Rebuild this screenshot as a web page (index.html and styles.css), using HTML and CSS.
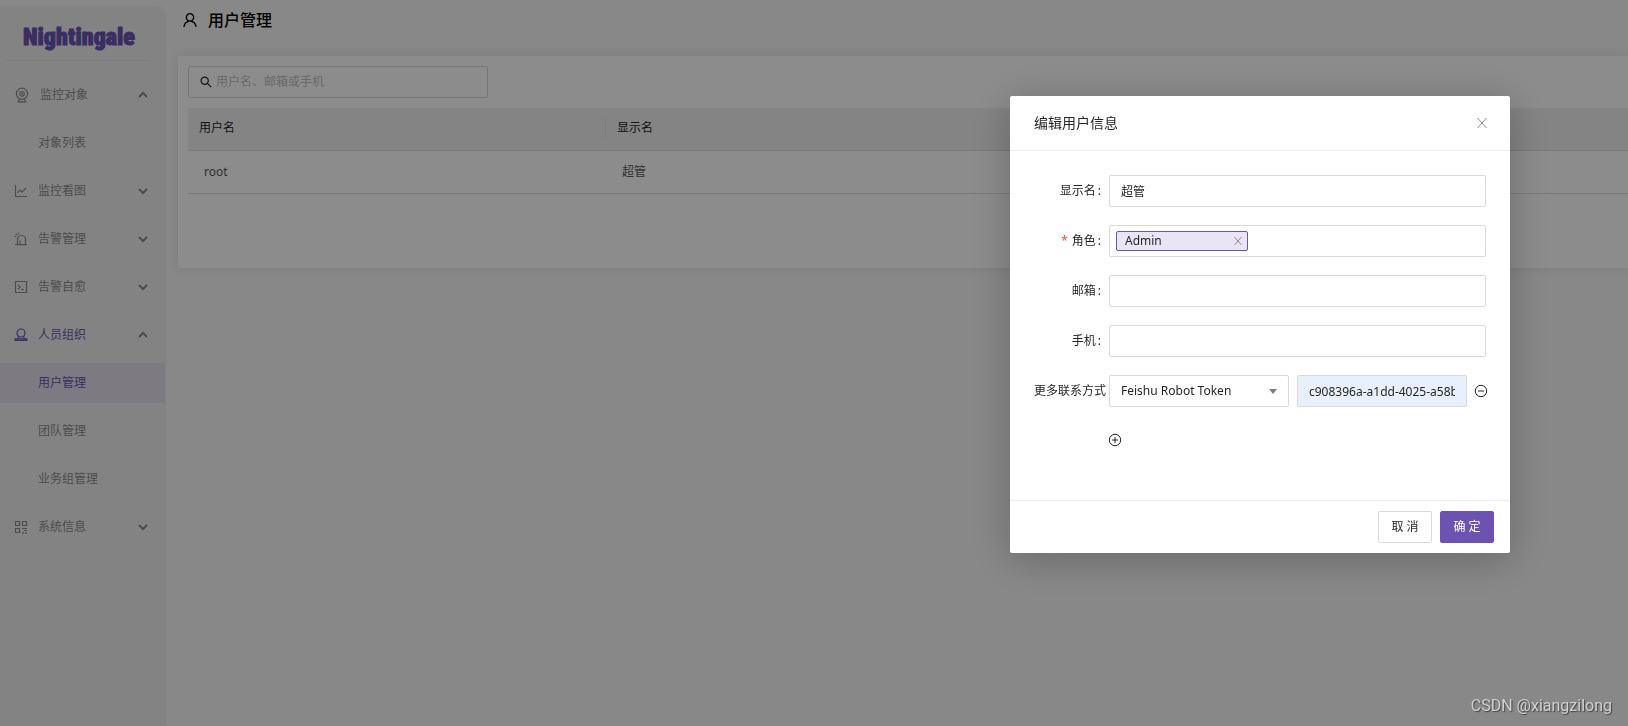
FILE: index.html
```html
<!DOCTYPE html>
<html lang="zh-CN">
<head>
  <meta charset="UTF-8">
  <title>用户管理</title>
  <link rel="stylesheet" href="styles.css">
</head>
<body>

<div class="layout">
  <aside class="sidebar">
    <div class="logo">Nightingale</div>
    <nav class="menu">
      <a href="#" class="menu-item">
        <svg class="icon icon-lg" viewBox="0 0 16 16"><circle cx="8" cy="6.8" r="5.6"/><circle cx="8" cy="6.8" r="2.3"/><circle cx="8" cy="6.8" r=".4"/><path d="M5.6 12.2L4.6 14.6M10.4 12.2l1 2.4M3.5 14.8h9"/></svg>
        <span>监控对象</span>
        <svg class="arrow" viewBox="0 0 10 10"><path d="M1 7l4-4 4 4"/></svg>
      </a>
      <a href="#" class="menu-item sub">对象列表</a>
      <a href="#" class="menu-item">
        <svg class="icon" viewBox="0 0 14 14"><path d="M1.5 1v11.5H13M3.5 9l2.3-3 2.4 2L12 4"/></svg>
        <span>监控看图</span>
        <svg class="arrow" viewBox="0 0 10 10"><path d="M1 3l4 4 4-4"/></svg>
      </a>
      <a href="#" class="menu-item">
        <svg class="icon" viewBox="0 0 14 14"><path d="M3.5 12V7.5a4 4 0 0 1 8 0V12M1 12.7h12M6 12V8.5M.5 4.5h2M1.6 1.6l1.6 1.6M4.6.6v1.6"/></svg>
        <span>告警管理</span>
        <svg class="arrow" viewBox="0 0 10 10"><path d="M1 3l4 4 4-4"/></svg>
      </a>
      <a href="#" class="menu-item">
        <svg class="icon" viewBox="0 0 14 14"><path d="M1.5 1.5h11v11h-11zM4 4.8L6.2 7 4 9.2M7 9.5h3"/></svg>
        <span>告警自愈</span>
        <svg class="arrow" viewBox="0 0 10 10"><path d="M1 3l4 4 4-4"/></svg>
      </a>
      <a href="#" class="menu-item open">
        <svg class="icon" viewBox="0 0 14 14"><circle cx="7" cy="5" r="4"/><path d="M4.5 8.3L3.8 10.5M9.5 8.3l.7 2.2M1.2 10.8h11.6v1.6H1.2z"/></svg>
        <span>人员组织</span>
        <svg class="arrow" viewBox="0 0 10 10"><path d="M1 7l4-4 4 4"/></svg>
      </a>
      <a href="#" class="menu-item sub active">用户管理</a>
      <a href="#" class="menu-item sub">团队管理</a>
      <a href="#" class="menu-item sub">业务组管理</a>
      <a href="#" class="menu-item">
        <svg class="icon" viewBox="0 0 14 14"><path d="M1.5 1.5h4v4h-4zM8.5 1.5h4v4h-4zM1.5 8.5h4v4h-4zM8 8.5h5M10 10.5h3M8 12.8h2M11 12.8h2"/></svg>
        <span>系统信息</span>
        <svg class="arrow" viewBox="0 0 10 10"><path d="M1 3l4 4 4-4"/></svg>
      </a>
    </nav>
  </aside>

  <main class="content">
    <header class="page-header">
      <svg class="user-icon" viewBox="0 0 1024 1024"><path d="M858.5 763.6a374 374 0 00-80.6-119.5 375.63 375.63 0 00-119.5-80.6c-.4-.2-.8-.3-1.2-.5C719.5 518 760 444.7 760 362c0-137-111-248-248-248S264 225 264 362c0 82.7 40.5 156 102.8 201.1-.4.2-.8.3-1.2.5-44.8 18.9-85 46-119.5 80.6a375.63 375.63 0 00-80.6 119.5A371.7 371.7 0 00136 901.8a8 8 0 008 8.2h60c4.4 0 7.9-3.5 8-7.8 2-77.2 33-149.5 87.8-204.3 56.7-56.7 132-87.9 212.2-87.9s155.5 31.2 212.2 87.9C779 752.7 810 825 812 902.2c.1 4.4 3.6 7.8 8 7.8h60a8 8 0 008-8.2c-1-47.8-10.9-94.3-29.5-138.2zM512 534c-45.9 0-89.1-17.9-121.6-50.4S340 407.9 340 362c0-45.9 17.9-89.1 50.4-121.6S466.1 190 512 190s89.1 17.9 121.6 50.4S684 316.1 684 362c0 45.9-17.9 89.1-50.4 121.6S557.9 534 512 534z"/></svg>
      <h1>用户管理</h1>
    </header>

    <section class="card">
      <label class="search">
        <svg viewBox="0 0 12 12"><circle cx="4.7" cy="4.7" r="3.6"/><path d="M7.4 7.4l3.8 3.8"/></svg>
        <input type="text" placeholder="用户名、邮箱或手机" aria-label="搜索">
      </label>
      <table class="user-table">
        <thead>
          <tr><th class="col">用户名</th><th class="col">显示名</th><th></th></tr>
        </thead>
        <tbody>
          <tr><td>root</td><td>超管</td><td></td></tr>
        </tbody>
      </table>
    </section>
  </main>
</div>

<!-- Modal -->
<div class="modal-mask">
  <div class="modal" role="dialog" aria-labelledby="modalTitle">
    <div class="modal-header">
      <h2 id="modalTitle">编辑用户信息</h2>
      <button type="button" class="icon-btn close-btn" aria-label="关闭">
        <svg viewBox="0 0 12 12"><path d="M1.5 1l9 10M10.5 1l-9 10"/></svg>
      </button>
    </div>
    <form class="modal-body" id="userForm">
      <div class="form-row">
        <label for="nickname">显示名</label>
        <input type="text" id="nickname" class="field" value="超管">
      </div>
      <div class="form-row">
        <label for="roles" class="required">角色</label>
        <div class="field tag-field">
          <span class="tag">Admin
            <button type="button" class="icon-btn tag-close" aria-label="移除">
              <svg viewBox="0 0 10 10"><path d="M1.5 1l7 8M8.5 1l-7 8"/></svg>
            </button>
          </span>
          <input type="text" id="roles">
        </div>
      </div>
      <div class="form-row">
        <label for="email">邮箱</label>
        <input type="text" id="email" class="field">
      </div>
      <div class="form-row">
        <label for="phone">手机</label>
        <input type="text" id="phone" class="field">
      </div>
      <div class="form-row">
        <label for="contact">更多联系方式</label>
        <div class="contact-row">
          <div class="select-wrap">
            <select id="contact" class="field">
              <option>Feishu Robot Token</option>
            </select>
          </div>
          <input type="text" class="field token" value="c908396a-a1dd-4025-a58b-7d2e" aria-label="Token">
          <button type="button" class="icon-btn round-btn" aria-label="删除">
            <svg viewBox="0 0 14 14"><circle cx="7" cy="7" r="5.7"/><path d="M4 7h6"/></svg>
          </button>
        </div>
      </div>
      <div class="form-row add-row">
        <button type="button" class="icon-btn round-btn" aria-label="添加">
          <svg viewBox="0 0 14 14"><circle cx="7" cy="7" r="5.7"/><path d="M4 7h6M7 4v6"/></svg>
        </button>
      </div>
    </form>
    <div class="modal-footer">
      <button type="button" class="btn">取 消</button>
      <button type="submit" form="userForm" class="btn btn-primary">确 定</button>
    </div>
  </div>
</div>

<div class="watermark">CSDN @xiangzilong</div>

</body>
</html>
```

FILE: styles.css
```css
* {
  box-sizing: border-box;
}
body {
  margin: 0;
  font-family: "Noto Sans", "Noto Sans CJK SC", sans-serif;
  font-size: 12px;
  line-height: 20px;
  color: #262626;
  background: #f8f8f8;
  overflow: hidden;
}
input, select, button {
  font: inherit;
  color: inherit;
}
svg {
  display: block;
  flex: none;
  fill: none;
  stroke: currentColor;
}
.layout {
  display: flex;
  min-height: 100vh;
}

/* Sidebar */
.sidebar {
  flex: none;
  width: 166px;
  margin-top: 6px;
  padding-right: 1px;
  background: #efefef;
  border-top-right-radius: 8px;
}
.logo {
  height: 55px;
  margin: 0 15px 14px 6px;
  padding-left: 17px;
  border-bottom: 1px solid #e2e2e2;
  font-family: Impact, "Roboto Condensed", Roboto, sans-serif;
  font-size: 24px;
  font-weight: 900;
  line-height: 62px;
  color: #6c53b1;
  -webkit-text-stroke: 1px #6c53b1;
}
.menu-item {
  display: flex;
  align-items: center;
  gap: 10px;
  height: 40px;
  margin-bottom: 8px;
  padding: 0 17px 0 14px;
  color: #8c8c8c;
  text-decoration: none;
}
.menu-item.sub {
  padding-left: 38px;
}
.menu-item.open, .menu-item.active {
  color: #6c53b1;
}
.menu-item.active {
  background: #e6dfec;
}
.icon {
  width: 14px;
  height: 14px;
  stroke-width: 1.2;
}
.icon-lg {
  width: 16px;
  height: 16px;
}
.arrow {
  width: 10px;
  height: 10px;
  margin-left: auto;
  color: #8c8c8c;
  stroke-width: 2;
}

/* Content */
.content {
  flex: 1;
  min-width: 0;
  padding-left: 12px;
}
.page-header {
  display: flex;
  align-items: center;
  gap: 9px;
  height: 40px;
  margin-bottom: 16px;
  padding-left: 3px;
  color: #000;
}
.page-header h1 {
  margin: 0;
  font-size: 16px;
  font-weight: 500;
}
.user-icon {
  width: 18px;
  height: 18px;
  fill: currentColor;
  stroke: none;
}
.card {
  min-height: 212px;
  padding: 10px 0 10px 10px;
  background: #fff;
  box-shadow: 0 0 12px rgba(0,0,0,0.1);
}
.search {
  display: flex;
  align-items: center;
  gap: 4px;
  width: 300px;
  height: 32px;
  margin-bottom: 10px;
  padding: 0 11px;
  border: 1px solid #d9d9d9;
  border-radius: 2px;
}
.search svg {
  width: 12px;
  height: 12px;
  stroke-width: 1.2;
}
.search input {
  flex: 1;
  padding: 0;
  border: 0;
  outline: 0;
  background: none;
}
.search input::placeholder {
  color: #bfbfbf;
}
.user-table {
  width: 100%;
  table-layout: fixed;
  border-collapse: separate;
  border-spacing: 0;
}
.user-table th, .user-table td {
  height: 43px;
  border-bottom: 1px solid #dcdcdc;
  text-align: left;
}
.user-table th {
  position: relative;
  padding: 0 11px 2px;
  background: #f0f0f0;
  font-weight: 400;
}
.user-table td {
  padding: 0 16px;
  color: #595959;
}
.user-table .col {
  width: 418px;
}
.user-table .col:first-child::after {
  content: "";
  position: absolute;
  top: 10px;
  right: 0;
  width: 1px;
  height: 20px;
  background: #e2e2e2;
}

/* Modal */
.modal-mask {
  position: fixed;
  inset: 0;
  display: flex;
  justify-content: flex-end;
  align-items: flex-start;
  padding: 96px 118px 0 0;
  background: rgba(0,0,0,0.45);
}
.modal {
  width: 500px;
  background: #fff;
  border-radius: 2px;
  box-shadow: 0 6px 40px rgba(0,0,0,0.25);
}
.modal-header {
  display: flex;
  align-items: center;
  justify-content: space-between;
  height: 55px;
  padding: 0 22px 0 24px;
  border-bottom: 1px solid #ececec;
}
.modal-header h2 {
  margin: 0;
  font-size: 14px;
  font-weight: 400;
}
.icon-btn {
  padding: 0;
  border: 0;
  background: none;
  cursor: pointer;
}
.close-btn svg {
  width: 12px;
  height: 12px;
  color: #8c8c8c;
}
.modal-body {
  height: 349px;
  padding: 24px;
}
.form-row {
  display: grid;
  grid-template-columns: 75px minmax(0, 1fr);
  align-items: center;
  margin-bottom: 18px;
}
.form-row label {
  justify-self: end;
  white-space: nowrap;
}
.form-row label::after {
  content: ":";
  margin: 0 8px 0 2px;
}
.form-row label[for="contact"] {
  justify-self: start;
}
.required::before {
  content: "*";
  margin-right: 4px;
  color: #ff4d4f;
}
.field {
  width: 100%;
  height: 32px;
  padding: 0 11px;
  border: 1px solid #d9d9d9;
  border-radius: 2px;
  background: #fff;
  outline: 0;
}
.tag-field {
  display: flex;
  align-items: center;
  padding: 0 6px;
}
.tag-field input {
  flex: 1;
  min-width: 0;
  border: 0;
  outline: 0;
}
.tag {
  display: flex;
  align-items: center;
  justify-content: space-between;
  width: 132px;
  height: 20px;
  padding: 0 4px 0 8px;
  border: 1px solid #6c53b1;
  border-radius: 2px;
  background: #eae5f4;
}
.tag-close svg {
  width: 10px;
  height: 10px;
  color: #8c8c8c;
}
.contact-row {
  display: flex;
  align-items: center;
  gap: 8px;
}
.select-wrap {
  position: relative;
  flex: none;
  width: 180px;
}
.select-wrap select {
  display: block;
  appearance: none;
}
.select-wrap::after {
  content: "";
  position: absolute;
  top: 14px;
  right: 12px;
  border: 4px solid transparent;
  border-top: 5px solid #7f7f7f;
  border-bottom: 0;
  pointer-events: none;
}
.token {
  width: 170px;
  background: #e8f0fe;
}
.round-btn svg {
  width: 14px;
  height: 14px;
}
.contact-row .round-btn {
  margin-left: -1px;
}
.add-row {
  min-height: 30px;
}
.add-row .round-btn {
  grid-column: 2;
  justify-self: start;
  margin-left: -1px;
}
.modal-footer {
  display: flex;
  justify-content: flex-end;
  gap: 8px;
  padding: 10px 16px;
  border-top: 1px solid #ececec;
}
.btn {
  min-width: 54px;
  height: 32px;
  padding: 0 12px;
  border: 1px solid #d9d9d9;
  border-radius: 2px;
  background: #fff;
  cursor: pointer;
}
.btn-primary {
  border-color: #6c53b1;
  background: #6c53b1;
  color: #fff;
}

.watermark {
  position: fixed;
  right: 16px;
  bottom: 10px;
  font-family: Roboto, sans-serif;
  font-size: 16px;
  color: #d0d0d0;
  text-shadow: 1px 1px 1px #444;
}
```
